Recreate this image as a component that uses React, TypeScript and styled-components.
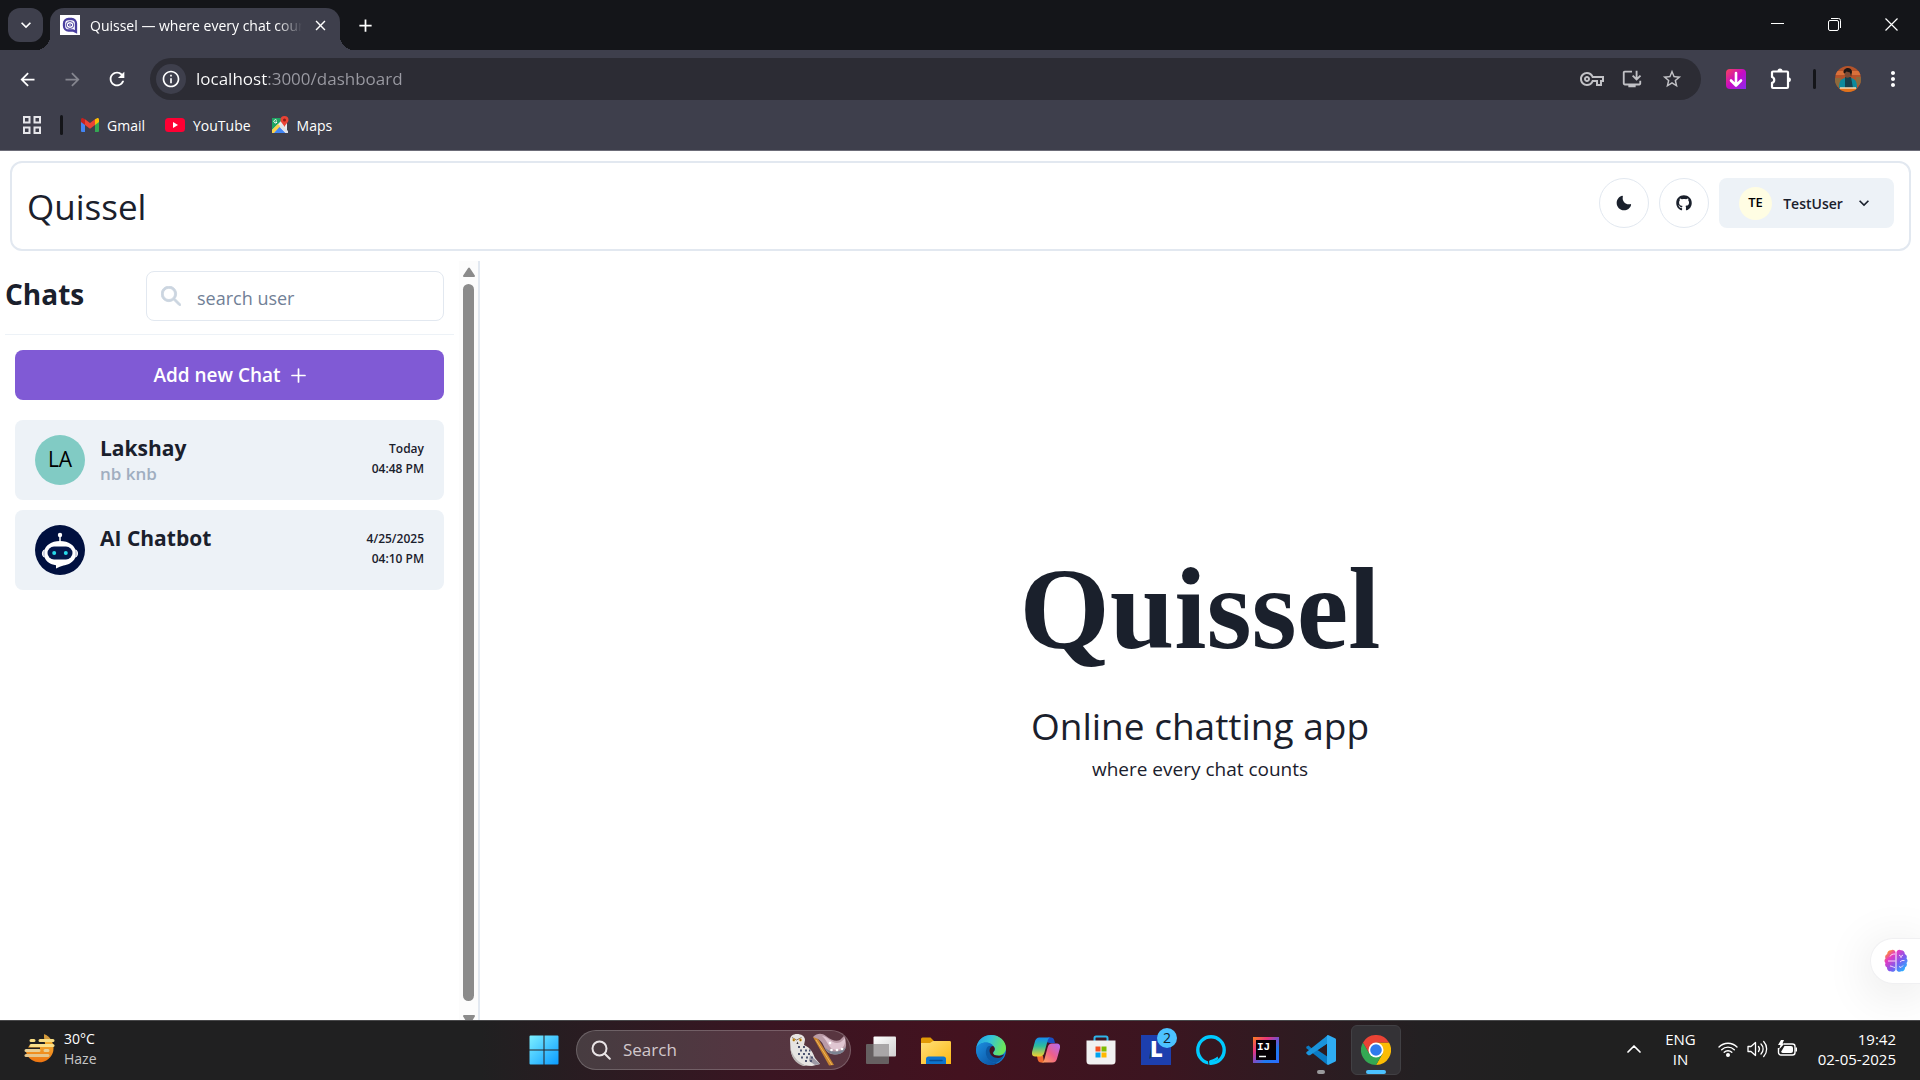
import React from "react";
import styled, { createGlobalStyle } from "styled-components";
import {
  MdAdd,
  MdArrowBack,
  MdArrowForward,
  MdClose,
  MdExpandMore,
  MdInfoOutline,
  MdInstallDesktop,
  MdMoreVert,
  MdOutlineVpnKey,
  MdRefresh,
  MdStarBorder,
} from "react-icons/md";
import { FaGithub } from "react-icons/fa";

const GlobalStyle = createGlobalStyle`
  *, *::before, *::after { box-sizing: border-box; }
  body {
    margin: 0;
    background: #fff;
    color: #1a202c;
    font-family: "Segoe UI", "Open Sans", "Noto Sans", sans-serif;
    line-height: 1.5;
  }
  h1, h2, h3, p { margin: 0; font-weight: 400; }
  button { padding: 0; border: 0; background: none; color: inherit; font: inherit; cursor: pointer; }
  input { min-width: 0; border: 0; background: none; color: inherit; font: inherit; outline: none; }
  a { color: inherit; text-decoration: none; }
  svg { display: block; flex: none; }
`;

const Screen = styled.div`
  display: flex;
  flex-direction: column;
  height: 100vh;
  overflow: hidden;
`;

/* ---------- browser chrome ---------- */

const TabStrip = styled.div`
  display: flex;
  align-items: stretch;
  height: 50px;
  flex: none;
  padding-left: 8px;
  background: #141519;
  color: #fff;
`;

const TabSearch = styled.button`
  display: grid;
  place-items: center;
  align-self: center;
  width: 35px;
  height: 34px;
  border-radius: 12px;
  background: #3e3f4c;
`;

const Tab = styled.div`
  position: relative;
  display: flex;
  align-items: center;
  gap: 10px;
  width: 290px;
  margin: 8px 0 0 7px;
  padding: 0 12px 8px 10px;
  border-radius: 14px 14px 0 0;
  background: #3e3f4c;
  font-size: 14px;

  &::before,
  &::after {
    content: "";
    position: absolute;
    bottom: 0;
    width: 14px;
    height: 14px;
  }
  &::before {
    left: -14px;
    background: radial-gradient(circle at 0 0, transparent 14px, #3e3f4c 14px);
  }
  &::after {
    right: -14px;
    background: radial-gradient(circle at 100% 0, transparent 14px, #3e3f4c 14px);
  }
`;

const TabTitle = styled.span`
  flex: 1;
  min-width: 0;
  overflow: hidden;
  white-space: nowrap;
  mask-image: linear-gradient(90deg, #000 88%, transparent);
`;

const IconButton = styled.button<{ $size?: number; $dim?: boolean }>`
  display: grid;
  place-items: center;
  width: ${(p) => p.$size ?? 40}px;
  height: ${(p) => p.$size ?? 40}px;
  flex: none;
  color: ${(p) => (p.$dim ? "#85868f" : "#fff")};
`;

const NewTab = styled(IconButton)`
  align-self: center;
  margin-left: 5px;
`;

const WindowButtons = styled.div`
  display: flex;
  margin-left: auto;
`;

const WindowButton = styled.button`
  display: grid;
  place-items: center;
  width: 57px;
  height: 48px;
`;

const Chrome = styled.div`
  flex: none;
  border-bottom: 1px solid #6c6c78;
  background: #3e3f4c;
  color: #fff;
`;

const ToolbarRow = styled.div`
  display: flex;
  align-items: center;
  gap: 5px;
  height: 58px;
  padding: 0 7px;
`;

const Omnibox = styled.div`
  display: flex;
  flex: 1;
  align-items: center;
  height: 42px;
  margin: 0 10px 0 8px;
  padding: 0 9px 0 6px;
  border-radius: 21px;
  background: #2c2c34;
`;

const SiteInfo = styled.button`
  display: grid;
  place-items: center;
  width: 30px;
  height: 30px;
  border-radius: 50%;
  background: #3e3f4c;
`;

const Address = styled.input`
  flex: 1;
  padding: 0 0 0 10px;
  background: linear-gradient(90deg, #fff 81px, #9b9ba3 81px);
  background-clip: text;
  -webkit-background-clip: text;
  -webkit-text-fill-color: transparent;
  color: #fff;
  font-size: 17px;
`;

const OmniAction = styled(IconButton)`
  color: #c2c2c6;
`;

const Divider = styled.span<{ $inset: number }>`
  width: 3px;
  height: 20px;
  margin: 0 ${(p) => p.$inset}px;
  border-radius: 2px;
  background: #141519;
`;

const BookmarkRow = styled.nav`
  display: flex;
  align-items: center;
  height: 42px;
  padding: 0 12px 8px;
  font-size: 14px;
`;

const BookmarkList = styled.div`
  display: flex;
  gap: 20px;
  margin-left: 10px;
`;

const Bookmark = styled.a`
  display: flex;
  align-items: center;
  gap: 8px;
`;

/* ---------- chat application ---------- */

const ChatApp = styled.div`
  position: relative;
  display: flex;
  flex: 1;
  flex-direction: column;
  min-height: 0;
  overflow: hidden;
  background: #fff;
`;

const Header = styled.header`
  display: flex;
  align-items: flex-start;
  gap: 10px;
  height: 90px;
  flex: none;
  margin: 10px 9px 10px 10px;
  padding: 15px;
  border: 2px solid #e2e8f0;
  border-radius: 12px;
`;

const Brand = styled.h1`
  flex: 1;
  font-size: 35px;
  line-height: 58px;
`;

const RoundButton = styled.button`
  display: grid;
  place-items: center;
  width: 50px;
  height: 50px;
  border: 1px solid #e2e8f0;
  border-radius: 50%;
`;

const UserButton = styled.button`
  display: flex;
  align-items: center;
  justify-content: space-between;
  width: 175px;
  height: 50px;
  padding: 0 20px;
  border-radius: 8px;
  background: #edf2f7;
  font-size: 14px;
  font-weight: 600;
`;

const Initials = styled.span<{ $size: number; $bg: string; $text: number; $weight: number }>`
  display: grid;
  place-items: center;
  flex: none;
  width: ${(p) => p.$size}px;
  height: ${(p) => p.$size}px;
  border-radius: 50%;
  background: ${(p) => p.$bg};
  color: #000;
  font-size: ${(p) => p.$text}px;
  font-weight: ${(p) => p.$weight};
`;

const Body = styled.div`
  display: flex;
  flex: 1;
  min-height: 0;
`;

const Sidebar = styled.aside`
  display: flex;
  width: 480px;
  flex: none;
  border-right: 2px solid #e2e8f0;
`;

const SidebarContent = styled.div`
  flex: 1;
  padding: 10px 5px;
`;

const SidebarTop = styled.div`
  display: flex;
  align-items: flex-start;
  justify-content: space-between;
  padding: 0 10px 13px 0;
  border-bottom: 1px solid #edf2f7;
`;

const ChatsTitle = styled.h2`
  font-size: 28px;
  font-weight: 700;
  line-height: 46px;
`;

const SearchBox = styled.label`
  display: flex;
  align-items: center;
  gap: 16px;
  width: 298px;
  height: 50px;
  padding: 0 14px;
  border: 1px solid #e2e8f0;
  border-radius: 8px;
  font-size: 18px;

  input { flex: 1; padding: 4px 0 0; }
  input::placeholder { color: #718096; opacity: 1; }
`;

const ChatArea = styled.div`
  display: flex;
  flex-direction: column;
  gap: 10px;
  padding: 15px 10px;
`;

const AddChat = styled.button`
  display: flex;
  align-items: center;
  justify-content: center;
  gap: 10px;
  height: 50px;
  margin-bottom: 10px;
  border-radius: 8px;
  background: #805ad5;
  color: #fff;
  font-size: 19px;
  font-weight: 600;
`;

const ChatCard = styled.button`
  display: flex;
  align-items: flex-start;
  gap: 15px;
  height: 80px;
  padding: 15px 20px;
  border-radius: 8px;
  background: #edf2f7;
  text-align: left;
`;

const ChatText = styled.span`
  flex: 1;
`;

const ChatName = styled.strong`
  display: block;
  font-size: 21px;
  font-weight: 700;
  line-height: 26px;
`;

const ChatPreview = styled.span`
  display: block;
  color: #a0aec0;
  font-size: 17px;
  font-weight: 600;
  line-height: 26px;
`;

const ChatTime = styled.span`
  padding-top: 4px;
  font-size: 12px;
  font-weight: 600;
  line-height: 20px;
  text-align: right;
`;

const ScrollTrack = styled.div`
  display: flex;
  flex-direction: column;
  align-items: center;
  width: 19px;
  padding: 6px 0 0;
  background: #fcfcfc;
`;

const ScrollThumb = styled.div`
  flex: 1;
  width: 11px;
  margin: 7px 0 14px;
  border-radius: 6px;
  background: #8b8b8b;
`;

const ScrollEnd = styled.div`
  height: 5px;
  overflow: hidden;
`;

const Welcome = styled.main`
  display: flex;
  flex: 1;
  flex-direction: column;
  align-items: center;
  justify-content: center;
  padding-top: 26px;
`;

const WelcomeTitle = styled.h2`
  margin-bottom: 4px;
  font-family: "Times New Roman", "Liberation Serif", serif;
  font-size: 116px;
  font-weight: 700;
  line-height: 170px;
`;

const WelcomeSub = styled.h3`
  font-size: 37px;
  line-height: 56px;
`;

const WelcomeNote = styled.p`
  font-size: 19px;
  line-height: 30px;
`;

const Assistant = styled.button`
  position: absolute;
  right: 0;
  bottom: 36px;
  display: flex;
  align-items: center;
  width: 50px;
  height: 46px;
  padding-left: 13px;
  border: 1px solid #f0f0f2;
  border-right: 0;
  border-radius: 23px 0 0 23px;
  background: #fff;
  box-shadow: 0 8px 50px rgba(0, 0, 0, 0.12);
`;

/* ---------- taskbar ---------- */

const Taskbar = styled.footer`
  display: grid;
  grid-template-columns: 1fr auto 1fr;
  align-items: center;
  height: 60px;
  flex: none;
  box-shadow: inset 0 1px #48484a;
  background: linear-gradient(90deg, #202021 25%, #3a1522 40%, #43121f 50%, #3c1520 60%, #232022 74%, #202020 80%);
  color: #fff;
`;

const Weather = styled.button`
  display: flex;
  align-items: center;
  gap: 8px;
  margin-left: 24px;
  padding-bottom: 2px;
  font-size: 14px;
  line-height: 20px;
  text-align: left;

  small { display: block; color: #c6c6c6; font-size: 14px; }
`;

const Dock = styled.div`
  display: flex;
  align-items: center;
  gap: 5px;
`;

const DockButton = styled.button<{ $active?: boolean }>`
  position: relative;
  display: grid;
  place-items: center;
  width: 50px;
  height: 50px;
  border: 1px solid ${(p) => (p.$active ? "#414044" : "transparent")};
  border-radius: 6px;
  background: ${(p) => (p.$active ? "#343236" : "none")};
`;

const Indicator = styled.span<{ $active?: boolean }>`
  position: absolute;
  bottom: 0;
  left: 50%;
  width: ${(p) => (p.$active ? 20 : 8)}px;
  height: 4px;
  border-radius: 2px;
  background: ${(p) => (p.$active ? "#4cc2ff" : "#9a9a9c")};
  transform: translateX(-50%);
`;

const Badge = styled.span`
  position: absolute;
  top: 2px;
  right: 3px;
  width: 20px;
  height: 20px;
  border-radius: 50%;
  background: #4cc2ff;
  color: #10202c;
  font-size: 14px;
  line-height: 20px;
  text-align: center;
`;

const TaskSearch = styled.label`
  display: flex;
  align-items: center;
  gap: 12px;
  width: 275px;
  height: 40px;
  margin-left: 2px;
  padding: 0 3px 0 14px;
  border: 1px solid rgba(255, 255, 255, 0.2);
  border-radius: 20px;
  background: rgba(255, 255, 255, 0.14);
  font-size: 17px;

  input { flex: 1; padding: 0; }
  input::placeholder { color: #d2c8cc; opacity: 1; }
`;

const Tray = styled.div`
  display: flex;
  align-items: center;
  justify-content: flex-end;
  padding: 0 24px 2px 0;
  font-size: 15px;
  line-height: 20px;
`;

const Language = styled.button`
  margin: 0 22px 0 24px;
  text-align: center;
`;

const Status = styled.button`
  display: flex;
  align-items: center;
  gap: 9px;
`;

const Clock = styled.button`
  margin-left: 20px;
  text-align: right;
`;

/* ---------- drawings ---------- */

const Favicon = () => (
  <svg width="20" height="20" viewBox="0 0 20 20">
    <rect width="20" height="20" fill="#fff" />
    <path d="M8.500 4h3A4.300 4.300 0 0 1 16 8.500v8.500l-3-1.500H8.500A4.500 4.500 0 0 1 4 11V8.500A4.500 4.500 0 0 1 8.500 4Z" fill="none" stroke="#4a3f9f" strokeWidth="2.300" />
    <ellipse cx="10" cy="10" rx="3.800" ry="3.500" fill="none" stroke="#5a50a8" strokeWidth="1" />
    <path d="M8.600 9v2M10 8.200v3.600M11.400 9v2" stroke="#4a3f9f" />
  </svg>
);

const AppsGrid = () => (
  <svg width="20" height="20" viewBox="0 0 20 20" fill="none" stroke="#e6e6ea" strokeWidth="2">
    <path d="M2 2h5.500v5.500H2zM12.500 2H18v5.500h-5.500zM2 12.500h5.500V18H2zM12.500 12.500H18V18h-5.500z" />
  </svg>
);

const PuzzleIcon = () => (
  <svg width="22" height="22" viewBox="0 0 22 22">
    <path d="M3 3.500h14a1 1 0 0 1 1 1v14.500a1 1 0 0 1-1 1H3a1 1 0 0 1-1-1v-4.200a3 3 0 0 0 0-5.800V4.500a1 1 0 0 1 1-1Z" fill="none" stroke="#fff" strokeWidth="2.200" strokeLinejoin="round" />
    <path d="M7.500 3a2.500 2.500 0 0 1 5 0ZM18.500 9.200a2.500 2.500 0 0 1 0 5Z" fill="#fff" />
  </svg>
);

const GmailLogo = () => (
  <svg width="18" height="14" viewBox="0 0 18 14">
    <path d="M0 2v11a1 1 0 0 0 1 1h3V5Z" fill="#4285f4" />
    <path d="M18 2v11a1 1 0 0 1-1 1h-3V5Z" fill="#34a853" />
    <path d="M14 1.300 16 .2C17 -.2 18 .5 18 1.600V4l-4 3Z" fill="#fbbc04" />
    <path d="M4 1.300 2 .2C1 -.2 0 .5 0 1.600V4l4 3Z" fill="#c5221f" />
    <path d="M4 1.300 9 5l5-3.700V7l-5 3.800L4 7Z" fill="#ea4335" />
  </svg>
);

const YouTubeLogo = () => (
  <svg width="20" height="14" viewBox="0 0 20 14">
    <rect width="20" height="14" rx="3.500" fill="#ff0033" />
    <path d="M8 4v6l5-3Z" fill="#fff" />
  </svg>
);

const MapsLogo = () => (
  <svg width="18" height="18" viewBox="0 0 18 18">
    <path d="M1 2h15v15H2a1 1 0 0 1-1-1Z" fill="#e8eaed" />
    <path d="M1 2h12L1 14Z" fill="#1fa463" />
    <path d="m1 14 6-6 3 3-7 6H1Z" fill="#fbd14b" />
    <path d="m3 17 5.500-6 6 6Z" fill="#4285f4" />
    <path d="m8.500 10.500 2-2L17 15v2h-2Z" fill="#dfe3e8" />
    <path d="M5.800 4.400A1.600 1.600 0 1 0 6 6H4.600" stroke="#fff" fill="none" />
    <path d="M13.500 0a4 4 0 0 1 4 4c0 2.500-3 4-4 7-1-3-4-4.500-4-7a4 4 0 0 1 4-4Z" fill="#ea4335" />
    <circle cx="13.500" cy="4" r="1.500" fill="#8c1d18" />
  </svg>
);

const DownloaderLogo = () => (
  <svg width="20" height="20" viewBox="0 0 20 20">
    <defs>
      <linearGradient id="dl" x1="0" y1="0" x2="1" y2="1">
        <stop offset="0" stopColor="#f8435c" />
        <stop offset=".5" stopColor="#c70bc4" />
        <stop offset="1" stopColor="#8a2bf0" />
      </linearGradient>
    </defs>
    <path d="M4 0h12a4 4 0 0 1 4 4v16H4a4 4 0 0 1-4-4V4a4 4 0 0 1 4-4Z" fill="url(#dl)" />
    <path d="M10 4v12M5 11.500l5 5 5-5" fill="none" stroke="#fff" strokeWidth="2.600" strokeLinecap="round" strokeLinejoin="round" />
  </svg>
);

const ProfilePhoto = () => (
  <svg width="26" height="26" viewBox="0 0 26 26">
    <defs>
      <clipPath id="pf"><circle cx="13" cy="13" r="13" /></clipPath>
    </defs>
    <g clipPath="url(#pf)">
      <path d="M0 0h26v26H0z" fill="#b5532a" />
      <path d="M0 5h26v4H0z" fill="#d9703a" />
      <path d="M0 12h6v9H0zM21 11h5v8h-5z" fill="#8d6a3c" />
      <path d="M4 23c0-7 1-10 6-11h6c5 1 6 4 6 11Z" fill="#0c8a9c" />
      <path d="M10 11h6l2 11h-8Z" fill="#17404c" />
      <ellipse cx="12.500" cy="7.500" rx="3" ry="4.200" fill="#7a4a34" />
      <path d="M8.500 6.500C8 1 17 0 17 6l-1 5-1-4.500-3.500-1-2 2Z" fill="#1c1614" />
      <path d="M4 22h18l-2 4H6Z" fill="#e0731c" />
      <path d="M5 22h16" stroke="#f1d9b4" strokeWidth="1.500" />
    </g>
  </svg>
);

const MoonIcon = () => (
  <svg width="16" height="16" viewBox="0 0 24 24" fill="currentColor">
    <path d="M21.400,13.700C20.600,13.900,19.800,14,19,14c-5,0-9-4-9-9c0-0.800,0.100-1.600,0.300-2.400c0.100-0.300,0-0.700-0.300-1c-0.300-0.300-0.600-0.400-1-0.300C4.300,2.700,1,7.100,1,12c0,6.100,4.900,11,11,11c4.900,0,9.300-3.300,10.600-8.100c0.100-0.300,0-0.700-0.300-1C22.100,13.700,21.700,13.600,21.400,13.700z" />
  </svg>
);

const ChevronIcon = () => (
  <svg width="20" height="20" viewBox="0 0 24 24" fill="currentColor">
    <path d="M16.590 8.590L12 13.170 7.410 8.590 6 10l6 6 6-6z" />
  </svg>
);

const SearchIcon = () => (
  <svg width="20" height="20" viewBox="0 0 24 24" fill="#cbd5e0" stroke="#cbd5e0">
    <path d="M23.384,21.619,16.855,15.090a9.284,9.284,0,1,0-1.768,1.768l6.529,6.529a1.266,1.266,0,0,0,1.768,0A1.251,1.251,0,0,0,23.384,21.619ZM2.750,9.500a6.750,6.750,0,1,1,6.750,6.750A6.758,6.758,0,0,1,2.750,9.500Z" />
  </svg>
);

const PlusIcon = () => (
  <svg width="15" height="15" viewBox="0 0 15 15" stroke="currentColor" strokeWidth="1.700" strokeLinecap="round">
    <path d="M7.500 1v13M1 7.500h13" />
  </svg>
);

const RobotAvatar = () => (
  <svg width="50" height="50" viewBox="0 0 50 50">
    <circle cx="25" cy="25" r="25" fill="#00103f" />
    <path d="M25 11v7" stroke="#fff" strokeWidth="1.500" />
    <circle cx="25" cy="10" r="2.200" fill="#fff" />
    <path d="M25 16c9 0 14.500 5 15.300 8.500 3.700 1 3.700 7 0 8C38 38 32 40 28.500 40.500c-2.500.5-5 1.500-7.500 3v-3.300C15 39.500 11 36.500 9.700 32.500c-3.700-1-3.700-7 0-8C10.500 21 16 16 25 16Z" fill="#fff" />
    <path d="M10 25c-3 1-3 6 0 7Z" fill="#cdd0de" />
    <path d="M40 25c3 1 3 6 0 7Z" fill="#cdd0de" />
    <rect x="12.500" y="21.500" width="25" height="13" rx="6.500" fill="#06184b" />
    <circle cx="19.200" cy="28" r="2" fill="#27dbea" />
    <circle cx="30.800" cy="28" r="2" fill="#27dbea" />
  </svg>
);

const ScrollArrow = ({ down = false }: { down?: boolean }) => (
  <svg width="12" height="10" viewBox="0 0 12 10" fill="#8b8b8b" stroke="#8b8b8b" strokeWidth="2" strokeLinejoin="round">
    <path d={down ? "M1 1h10L6 9Z" : "M6 1.500 1 9h10Z"} />
  </svg>
);

const BrainIcon = () => (
  <svg width="24" height="24" viewBox="0 0 24 24">
    <defs>
      <linearGradient id="br" x1="0" y1="0" x2="1" y2="1">
        <stop offset=".08" stopColor="#ffa01e" />
        <stop offset=".3" stopColor="#e63ac2" />
        <stop offset=".6" stopColor="#7a5cf0" />
        <stop offset=".9" stopColor="#27b4ff" />
      </linearGradient>
    </defs>
    <path d="M11.500 3v18a3 3 0 0 1-4.500 1.300A3.500 3.500 0 0 1 3 18.500 3.500 3.500 0 0 1 1.500 14a3 3 0 0 1 0-4.500A3.500 3.500 0 0 1 3.200 5 3.500 3.500 0 0 1 7 1.300 3 3 0 0 1 11.500 3ZM12.500 3v18a3 3 0 0 0 4.500 1.300 3.500 3.500 0 0 0 4-3.800 3.500 3.500 0 0 0 1.500-4.500 3 3 0 0 0 0-4.500A3.500 3.500 0 0 0 20.800 5 3.500 3.500 0 0 0 17 1.300 3 3 0 0 0 12.500 3Z" fill="url(#br)" />
    <path d="M4 12h7.500M6 7.500C7 5.500 8.500 5 11 5M6 17c1.500 0 2.500 1 5 1.500M15 6l2 1.500L19 6M17 7.500V9M16 13l2-1.500h2.500M15 17.500l2 1 2-2" fill="none" stroke="#ffe6ff" strokeWidth=".9" />
  </svg>
);

const HazeIcon = () => (
  <svg width="32" height="30" viewBox="0 0 32 30">
    <defs>
      <linearGradient id="hz" x1="0" y1="0" x2="0" y2="1">
        <stop offset="0" stopColor="#f5c23c" />
        <stop offset="1" stopColor="#ee7411" />
      </linearGradient>
    </defs>
    <path d="M20 1c5 2 9.500 6 9.500 13A14 14 0 0 1 2 18l3-6h16Z" fill="url(#hz)" />
    <path d="M20 0c4 1.500 6 3.500 7 6h-6Z" fill="#d59a3c" />
    <path d="M5 8.500h16v1.500H5zM2 13.500h14v1.500H2z" fill="#212121" />
    <g strokeWidth="3" strokeLinecap="round">
      <path d="M7 6.500h3M16 6.500h13" stroke="#f8dc82" />
      <path d="M7 11.500h22" stroke="#fbe08a" />
      <path d="M2 16.500h13M21 16.500h3" stroke="#e9cf94" />
      <path d="M2 21.500h22" stroke="#e6c68c" />
    </g>
  </svg>
);

const WindowsLogo = () => (
  <svg width="30" height="30" viewBox="0 0 30 30">
    <defs>
      <linearGradient id="wn" x1="0" y1="0" x2="1" y2="1">
        <stop offset="0" stopColor="#7df0ff" />
        <stop offset="1" stopColor="#0a9bff" />
      </linearGradient>
    </defs>
    <path d="M1.500.5h13v14h-14v-13a1 1 0 0 1 1-1ZM15.500.5h13a1 1 0 0 1 1 1v13h-14ZM.5 15.500h14v14h-13a1 1 0 0 1-1-1ZM15.500 15.500h14v13a1 1 0 0 1-1 1h-13Z" fill="url(#wn)" />
  </svg>
);

const TaskSearchIcon = () => (
  <svg width="20" height="20" viewBox="0 0 20 20" fill="none" stroke="#e9e4e6" strokeWidth="2" strokeLinecap="round">
    <circle cx="8.500" cy="8.500" r="7" />
    <path d="m13.800 13.800 5 5" />
  </svg>
);

const OwlAndPipe = () => (
  <svg width="58" height="34" viewBox="0 0 58 34">
    <path d="M1 7C1 3 4 1 8 1s8 2 8 6l-1 5c7 3 9 8 11 13l5 6-8 2C11 33 3 27 1.500 17Z" fill="#e6e4e2" />
    <path d="M2 17c3 8 8 13 16 16h-4C6 30 2 24 2 17Z" fill="#bdb9b8" />
    <path d="M21 22l10 9-5 1-6-4Z" fill="#9d9aa6" />
    <path d="M3 4.500 7.500 7 12.500 4.500" stroke="#8a7a6a" fill="none" />
    <circle cx="4.800" cy="7" r="1.400" fill="#e6a72c" />
    <circle cx="11.500" cy="7" r="1.400" fill="#e6a72c" />
    <circle cx="4.800" cy="7" r=".6" fill="#221a10" />
    <circle cx="11.500" cy="7" r=".6" fill="#221a10" />
    <path d="M8.500 8.500 7.500 11h2Z" fill="#3a3234" />
    <path d="M9 14h2M14 14h2M11 17.500h2M16 17.500h2M20 17.500h1.500M9 21h2M14 21h2M19 21h2M12 24.500h2M17 24.500h2M22 24.500h2M16 28h2M21 28h2" stroke="#4e5470" strokeWidth="2" />
    <path d="M24 4h4l17 28-5 .5Z" fill="#c9842e" />
    <path d="M27 7l16 25" stroke="#f0b85a" />
    <path d="M24 4c4-4 9-4 13-1 5 4 10 6 14 4l4-4c1.500 2 1.500 4 2 7 1 7-4 11.500-11 11.500-6 0-9-3-11-8-2-5-5-8-11-9.500Z" fill="#b99aa6" />
    <path d="M33 3c7 1 9 7 15 7 4 0 6-3 8-5 1 8-3 12-9 12-7 0-8-9-14-14Z" fill="#e0c6d2" />
    <path d="M36 14.500c2 5 6 7 11 7 5 0 9-3 10-8-3 4-7 5-11 5s-7-1-10-4Z" fill="#7c8492" />
    <circle cx="41" cy="10" r="1.300" fill="#fff" /><circle cx="42.500" cy="17" r="1.300" fill="#fff" /><circle cx="48" cy="17" r="1.300" fill="#fff" /><circle cx="53" cy="16" r="1.300" fill="#fff" />
  </svg>
);

const TaskViewIcon = () => (
  <svg width="30" height="28" viewBox="0 0 30 28">
    <defs>
      <linearGradient id="tv" x1="0" y1="0" x2="1" y2="1"><stop stopColor="#fff" /><stop offset="1" stopColor="#d0d0d0" /></linearGradient>
    </defs>
    <rect x="7.500" y=".5" width="22.500" height="20" rx="1" fill="url(#tv)" />
    <rect x="0" y="8" width="23" height="20" rx="1" fill="#666061" />
    <path d="M7.500 8H23v12.500H7.500z" fill="#a9a6a7" />
  </svg>
);

const FolderIcon = () => (
  <svg width="30" height="27" viewBox="0 0 30 27">
    <defs>
      <linearGradient id="fo" x1="0" y1="0" x2="1" y2="1"><stop stopColor="#ffe07a" /><stop offset="1" stopColor="#fdb813" /></linearGradient>
    </defs>
    <path d="M0 2a1.500 1.500 0 0 1 1.500-1.500h8L13 4h15.500A1.500 1.500 0 0 1 30 5.500V12H0Z" fill="#e29a06" />
    <path d="M0 6h9l3-2h16.500A1.500 1.500 0 0 1 30 5.500V27H0Z" fill="url(#fo)" />
    <path d="M5 27v-5a2.500 2.500 0 0 1 2.500-2.500h15A2.500 2.500 0 0 1 25 22v5Z" fill="#0d75cf" />
    <path d="M9 23.500h12" stroke="#064b93" strokeWidth="1.500" strokeLinecap="round" />
  </svg>
);

const EdgeIcon = () => (
  <svg width="30" height="30" viewBox="0 0 30 30">
    <defs>
      <linearGradient id="ed1" x1="0" y1="0" x2="1" y2=".3"><stop stopColor="#1e9de8" /><stop offset=".5" stopColor="#35c4d8" /><stop offset="1" stopColor="#6ae55c" /></linearGradient>
      <linearGradient id="ed2" x1="0" y1="0" x2="1" y2="1"><stop stopColor="#1c8fe0" /><stop offset="1" stopColor="#0a4d9c" /></linearGradient>
    </defs>
    <circle cx="15" cy="15" r="15" fill="#1480d4" />
    <path d="M.3 13C1.500 5 7.500 0 15 0c9 0 15 6.500 15 13 0 5-4 7.500-8 7.500-3 0-5-1-5-2.300 0-1 1.500-1.700 1.500-4C18.500 10 14 7.500 10 7.500 5 7.500 1.500 10 .3 13Z" fill="url(#ed1)" />
    <path d="M10.500 13.500C8 20 12.500 28 21 28c-2 1.500-4 2-6 2C6 30 0 23 .2 14 2 9.500 6 7.500 10 7.500c3 0 5.500 1.500 7 3-3 0-5.500 1-6.500 3Z" fill="url(#ed2)" />
    <path d="M10.500 13.500c1-2.500 3.500-3 6-2.500 2 1 2.500 3 2 4.500-.5 1-1.500 1.700-1.500 2.700 0 1.300 2 2.800 5.500 2.800 2 0 4-.6 5.500-1.500-1 4-4 7-8 8.500-8-.5-12-8-9.500-14.500Z" fill="#0c59a4" />
    <path d="M17 11c1.500.8 2 2.500 1.500 4-.5 1.300-1.500 2-1.500 3 0 1.500 2 2.800 5.500 2.800 2 0 4-.5 5.700-1.600-1.200 2.200-3.500 3.800-6.200 3.800-5 0-8.500-3.500-8.500-7.500 0-2.300 1.500-4 3.500-4.500Z" fill="#43121f" />
  </svg>
);

const CopilotIcon = () => (
  <svg width="28" height="26" viewBox="0 0 28 26">
    <defs>
      <linearGradient id="cp1" x1="0" y1="0" x2="0" y2="1"><stop stopColor="#158cf0" /><stop offset=".45" stopColor="#2dbd9c" /><stop offset="1" stopColor="#f5cf2e" /></linearGradient>
      <linearGradient id="cp2" x1="1" y1="0" x2="0" y2="1"><stop stopColor="#b06af8" /><stop offset=".5" stopColor="#ee5f8a" /><stop offset="1" stopColor="#ffab58" /></linearGradient>
    </defs>
    <path d="M16 .5h3c2 0 2.700 1 3.300 3L23 6h-5l-4-1Z" fill="#1b4fc4" />
    <path d="M12 25.500H9c-2 0-2.700-1-3.300-3L5 19h6Z" fill="#f06a30" />
    <path d="M7.500.5H19c-2 0-3 1.500-3.600 4l-3 11c-.7 2.500-2 4-4.400 4H3c-3 0-3.500-2.500-2.700-5.500l2.500-9C3.500 2 5 .5 7.500.5Z" fill="url(#cp1)" />
    <path d="M20.500 25.500H9c2 0 3-1.500 3.600-4l3-11c.7-2.500 2-4 4.400-4h5c3 0 3.500 2.500 2.700 5.500l-2.500 9c-.7 3-2.200 4.500-4.700 4.500Z" fill="url(#cp2)" />
  </svg>
);

const StoreIcon = () => (
  <svg width="30" height="30" viewBox="0 0 30 30">
    <path d="M8.500 6V3a1.500 1.500 0 0 1 1.500-1.500h10A1.500 1.500 0 0 1 21.500 3v3" fill="none" stroke="#2fb5ea" strokeWidth="2" />
    <path d="M.5 5.500h29V26a3.500 3.500 0 0 1-3.500 3.500H4A3.500 3.500 0 0 1 .5 26Z" fill="#f1f1f1" />
    <path d="M9.500 11.500h5v5h-5z" fill="#f25022" /><path d="M15.500 11.500h5v5h-5z" fill="#7fba00" />
    <path d="M9.500 17.500h5v5h-5z" fill="#00a4ef" /><path d="M15.500 17.500h5v5h-5z" fill="#ffb900" />
  </svg>
);

const LetterTile = () => (
  <svg width="30" height="30" viewBox="0 0 30 30" overflow="visible">
    <path d="M0 0h30v30H0z" fill="#1d3fae" />
    <path d="M11 6v16l-3 2Z" fill="#153a58" />
    <text x="9" y="22" fill="#fff" fontFamily="Open Sans, sans-serif" fontWeight="800" fontSize="22">L</text>
  </svg>
);

const AlexaIcon = () => (
  <svg width="30" height="30" viewBox="0 0 30 30">
    <circle cx="15" cy="15" r="13.200" fill="none" stroke="#00caff" strokeWidth="3.400" />
    <path d="M13 30v-2.500c0-1.500.5-2 1.500-2.400 2-.6 5-1.500 7-3.600l1 2.500-6 3.500-2 2.500Z" fill="#00caff" />
    <path d="m12.300 25.500.7 4.500" stroke="#31191f" strokeWidth="1" />
  </svg>
);

const IntellijIcon = () => (
  <svg width="26" height="26" viewBox="0 0 26 26" overflow="visible">
    <defs>
      <linearGradient id="ij" x1="0" y1="0" x2="1" y2="1"><stop stopColor="#fc801d" /><stop offset=".3" stopColor="#e8337f" /><stop offset=".5" stopColor="#7b4fc8" /><stop offset=".7" stopColor="#1e7bf0" /><stop offset="1" stopColor="#2d6bff" /></linearGradient>
    </defs>
    <path d="M0 0h26v26H0z" fill="url(#ij)" />
    <path d="M3 3h20v20H3z" fill="#050005" />
    <text x="4" y="13" fill="#fff" fontFamily="Liberation Mono, monospace" fontWeight="700" fontSize="11">IJ</text>
    <path d="M6 19.500h7" stroke="#fff" strokeWidth="1.500" />
  </svg>
);

const VsCodeIcon = () => (
  <svg width="30" height="30" viewBox="0 0 30 30">
    <path d="M22 0 7 14.500 2.500 10.500.3 11.800v1.500L4 16 21.500 30l.5-8L11.500 15 22 8Z" fill="#0a7bc4" />
    <path d="m2.300 20.300-2-1.700v-1.400L22 0v8L4 20.300Z" fill="#1a94dc" />
    <path d="m22 0 7 3.200a1.500 1.500 0 0 1 1 1.500v20.600a1.500 1.500 0 0 1-1 1.500L22 30c-.6-.2-1-.8-1-1.500v-27C21 .8 21.400.2 22 0Z" fill="#2fadf3" />
  </svg>
);

const ChromeIcon = () => (
  <svg width="30" height="30" viewBox="0 0 48 48">
    <path d="M24 12h20.800A24 24 0 0 1 24 48L34.400 30Z" fill="#fbbc04" />
    <path d="M13.600 30 3.200 12A24 24 0 0 0 24 48l10.400-18Z" fill="#34a853" />
    <path d="M24 12h20.800A24 24 0 0 0 3.200 12l10.400 18Z" fill="#ea4335" />
    <circle cx="24" cy="24" r="12" fill="#fff" />
    <circle cx="24" cy="24" r="9.300" fill="#2f7bed" />
  </svg>
);

const WifiIcon = () => (
  <svg width="20" height="16" viewBox="0 0 20 16" fill="none" stroke="#fff" strokeWidth="1.400" strokeLinecap="round">
    <path d="M1 6a12.700 12.700 0 0 1 18 0M3.700 8.700a9 9 0 0 1 12.600 0M6.200 11.300a5.400 5.400 0 0 1 7.600 0" />
    <circle cx="10" cy="14" r="1.300" fill="#fff" />
  </svg>
);

const VolumeIcon = () => (
  <svg width="21" height="18" viewBox="0 0 21 18" fill="none" stroke="#fff" strokeWidth="1.300" strokeLinecap="round" strokeLinejoin="round">
    <path d="M1 6.500h3L8.500 2.500v13L4 11.500H1ZM11.500 6.500a4 4 0 0 1 0 5M14 4a7 7 0 0 1 0 10M16.700 1.500a11 11 0 0 1 0 15" />
  </svg>
);

const BatteryIcon = () => (
  <svg width="21" height="18" viewBox="0 0 21 18" fill="none" stroke="#fff" strokeWidth="1.400">
    <path d="M7 4h8.500A2.500 2.500 0 0 1 18 6.500v6a2.500 2.500 0 0 1-2.500 2.500H4a2.500 2.500 0 0 1-2.500-2.500V8" />
    <path d="M18.500 7.500h1.500v4h-1.500z" fill="#fff" stroke="none" />
    <path d="M7.500 6H14a2 2 0 0 1 2 2v3a2 2 0 0 1-2 2H5.500L4 12Z" fill="#fff" stroke="none" />
    <path d="M4 0h3L5.500 3.500h2L2 9.500 3.500 5H1Z" fill="#fff" stroke="none" />
  </svg>
);

const CaretUp = () => (
  <svg width="14" height="8" viewBox="0 0 14 8" fill="none" stroke="#fff" strokeWidth="1.700" strokeLinecap="round" strokeLinejoin="round">
    <path d="m1 7 6-6 6 6" />
  </svg>
);

/* ---------- data ---------- */

const chats = [
  { name: "Lakshay", preview: "nb knb", day: "Today", time: "04:48 PM", initials: "LA" },
  { name: "AI Chatbot", preview: "", day: "4/25/2025", time: "04:10 PM", initials: "" },
];

const bookmarks = [
  { name: "Gmail", icon: <GmailLogo /> },
  { name: "YouTube", icon: <YouTubeLogo /> },
  { name: "Maps", icon: <MapsLogo /> },
];

const dockApps = [
  { name: "Task view", icon: <TaskViewIcon /> },
  { name: "File Explorer", icon: <FolderIcon /> },
  { name: "Edge", icon: <EdgeIcon /> },
  { name: "Copilot", icon: <CopilotIcon /> },
  { name: "Store", icon: <StoreIcon /> },
  { name: "Lenovo", icon: <LetterTile />, badge: "2" },
  { name: "Alexa", icon: <AlexaIcon /> },
  { name: "IntelliJ IDEA", icon: <IntellijIcon /> },
  { name: "VS Code", icon: <VsCodeIcon />, running: true },
  { name: "Chrome", icon: <ChromeIcon />, running: true, active: true },
];

export default function App() {
  return (
    <Screen>
      <GlobalStyle />
      <TabStrip>
        <TabSearch aria-label="Search tabs"><MdExpandMore size={20} /></TabSearch>
        <Tab>
          <Favicon />
          <TabTitle>Quissel — where every chat counts</TabTitle>
          <IconButton $size={16} aria-label="Close tab"><MdClose size={17} /></IconButton>
        </Tab>
        <NewTab aria-label="New tab"><MdAdd size={21} /></NewTab>
        <WindowButtons>
          <WindowButton aria-label="Minimize">
            <svg width="13" height="13" viewBox="0 0 13 13" stroke="#fff"><path d="M0 5.500h13" /></svg>
          </WindowButton>
          <WindowButton aria-label="Restore">
            <svg width="13" height="13" viewBox="0 0 13 13" fill="none" stroke="#fff">
              <rect x=".5" y="2.500" width="10" height="10" rx="1.500" />
              <path d="M3 .5h7.500a2 2 0 0 1 2 2V10" />
            </svg>
          </WindowButton>
          <WindowButton aria-label="Close">
            <svg width="13" height="13" viewBox="0 0 13 13" stroke="#fff" strokeWidth="1.200"><path d="m.5.5 12 12M12.500.5l-12 12" /></svg>
          </WindowButton>
        </WindowButtons>
      </TabStrip>

      <Chrome>
        <ToolbarRow>
          <IconButton aria-label="Back"><MdArrowBack size={21} /></IconButton>
          <IconButton $dim aria-label="Forward"><MdArrowForward size={21} /></IconButton>
          <IconButton aria-label="Reload"><MdRefresh size={22} /></IconButton>
          <Omnibox>
            <SiteInfo aria-label="Site information"><MdInfoOutline size={20} /></SiteInfo>
            <Address aria-label="Address" defaultValue="localhost:3000/dashboard" />
            <OmniAction aria-label="Passwords"><MdOutlineVpnKey size={24} /></OmniAction>
            <OmniAction aria-label="Install app"><MdInstallDesktop size={22} /></OmniAction>
            <OmniAction aria-label="Bookmark this page"><MdStarBorder size={22} /></OmniAction>
          </Omnibox>
          <IconButton aria-label="Downloader"><DownloaderLogo /></IconButton>
          <IconButton aria-label="Extensions"><PuzzleIcon /></IconButton>
          <Divider $inset={7} />
          <IconButton aria-label="Profile"><ProfilePhoto /></IconButton>
          <IconButton aria-label="Menu"><MdMoreVert size={24} /></IconButton>
        </ToolbarRow>
        <BookmarkRow aria-label="Bookmarks">
          <IconButton aria-label="Apps"><AppsGrid /></IconButton>
          <Divider $inset={8} />
          <BookmarkList>
            {bookmarks.map((b) => (
              <Bookmark key={b.name} href="#">{b.icon}{b.name}</Bookmark>
            ))}
          </BookmarkList>
        </BookmarkRow>
      </Chrome>

      <ChatApp>
        <Header>
          <Brand>Quissel</Brand>
          <RoundButton aria-label="Dark mode"><MoonIcon /></RoundButton>
          <RoundButton aria-label="GitHub"><FaGithub size={16} /></RoundButton>
          <UserButton>
            <Initials $size={33} $bg="#fffde3" $text={13} $weight={600}>TE</Initials>
            TestUser
            <ChevronIcon />
          </UserButton>
        </Header>

        <Body>
          <Sidebar>
            <SidebarContent>
              <SidebarTop>
                <ChatsTitle>Chats</ChatsTitle>
                <SearchBox>
                  <SearchIcon />
                  <input type="text" placeholder="search user" aria-label="search user" />
                </SearchBox>
              </SidebarTop>
              <ChatArea>
                <AddChat>Add new Chat <PlusIcon /></AddChat>
                {chats.map((c) => (
                  <ChatCard key={c.name}>
                    {c.initials ? <Initials $size={50} $bg="#81cbc4" $text={21} $weight={500}>{c.initials}</Initials> : <RobotAvatar />}
                    <ChatText>
                      <ChatName>{c.name}</ChatName>
                      {c.preview && <ChatPreview>{c.preview}</ChatPreview>}
                    </ChatText>
                    <ChatTime>{c.day}<br />{c.time}</ChatTime>
                  </ChatCard>
                ))}
              </ChatArea>
            </SidebarContent>
            <ScrollTrack>
              <ScrollArrow />
              <ScrollThumb />
              <ScrollEnd><ScrollArrow down /></ScrollEnd>
            </ScrollTrack>
          </Sidebar>

          <Welcome>
            <WelcomeTitle>Quissel</WelcomeTitle>
            <WelcomeSub>Online chatting app</WelcomeSub>
            <WelcomeNote>where every chat counts</WelcomeNote>
          </Welcome>
        </Body>
        <Assistant aria-label="Assistant"><BrainIcon /></Assistant>
      </ChatApp>

      <Taskbar>
        <Weather>
          <HazeIcon />
          <span>30°C<small>Haze</small></span>
        </Weather>
        <Dock>
          <DockButton aria-label="Start"><WindowsLogo /></DockButton>
          <TaskSearch>
            <TaskSearchIcon />
            <input type="text" placeholder="Search" aria-label="Search" />
            <OwlAndPipe />
          </TaskSearch>
          {dockApps.map((a) => (
            <DockButton key={a.name} $active={a.active} aria-label={a.name}>
              {a.icon}
              {a.badge && <Badge>{a.badge}</Badge>}
              {a.running && <Indicator $active={a.active} />}
            </DockButton>
          ))}
        </Dock>
        <Tray>
          <button aria-label="Show hidden icons"><CaretUp /></button>
          <Language>ENG<br />IN</Language>
          <Status aria-label="Network, sound and battery">
            <WifiIcon /><VolumeIcon /><BatteryIcon />
          </Status>
          <Clock>19:42<br />02-05-2025</Clock>
        </Tray>
      </Taskbar>
    </Screen>
  );
}
